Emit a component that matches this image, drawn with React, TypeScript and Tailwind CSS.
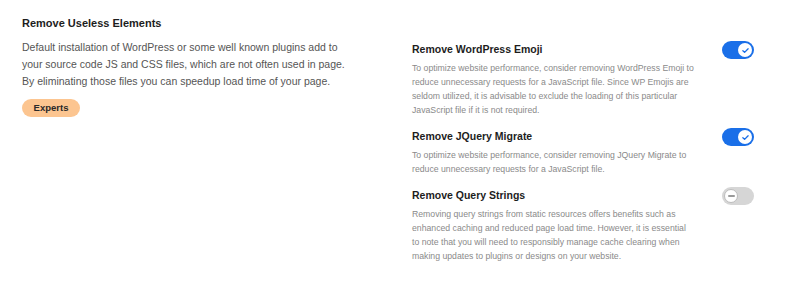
import React from 'react'

// ── سوییچ روشن/خاموش ──
function Toggle({ on }: { on: boolean }) {
 return (
  <div className={`w-[32px] h-[18px] rounded-full flex items-center px-[2px] shrink-0 ${on ? 'bg-[#1a6fe8] justify-end' : 'bg-[#d6d6d6] justify-start'}`}>
   <div className={`w-[14px] h-[14px] rounded-full bg-white flex items-center justify-center ${on ? '' : 'border border-[#bdbdbd]'}`}>
    {on ? (
     <svg viewBox="0 0 12 12" className="w-[9px] h-[9px]" fill="none" stroke="#1a6fe8" strokeWidth="1.8" strokeLinecap="round" strokeLinejoin="round">
      <path d="M2.5 6.3l2.3 2.2L9.5 3.8" />
     </svg>
    ) : (
     <div className="w-[7px] h-[1.5px] bg-[#9a9a9a] rounded" />
    )}
   </div>
  </div>
 )
}

function Option({ title, desc, on }: { title: string; desc: string; on: boolean }) {
 return (
  <div className="flex items-start justify-between">
   <div className="w-[282px]">
    <div className="text-[10.5px] font-bold text-[#1d1d1d] leading-[14px]">{title}</div>
    <p className="text-[8.7px] leading-[14px] text-[#8a8a8a] mt-[5px]">{desc}</p>
   </div>
   <div className="-mt-[1px]">
    <Toggle on={on} />
   </div>
  </div>
 )
}

export default function App() {
 return (
  <div className="w-[800px] h-[282px] bg-white pl-[22px] pt-[16px] font-['Liberation_Sans',Arial,sans-serif]">
   <h2 className="text-[11px] font-bold text-[#1d1d1d] leading-[14px]">Remove Useless Elements</h2>
   <div className="flex mt-[9px]">
    <div className="w-[390px]">
     <p className="w-[336px] text-[10.5px] leading-[17px] text-[#555]">
      Default installation of WordPress or some well known plugins add to your source code JS and CSS files, which are not often used in page. By eliminating those files you can speedup load time of your page.
     </p>
     <span className="inline-block mt-[9px] bg-[#fcc590] text-[#2a2a2a] text-[9.5px] font-bold rounded-full w-[58px] h-[18px] leading-[18px] text-center">Experts</span>
    </div>
    <div className="w-[342px] flex flex-col gap-[12px] pt-[3px]">
     <Option on title="Remove WordPress Emoji" desc="To optimize website performance, consider removing WordPress Emoji to reduce unnecessary requests for a JavaScript file. Since WP Emojis are seldom utilized, it is advisable to exclude the loading of this particular JavaScript file if it is not required." />
     <Option on title="Remove JQuery Migrate" desc="To optimize website performance, consider removing JQuery Migrate to reduce unnecessary requests for a JavaScript file." />
     <Option on={false} title="Remove Query Strings" desc="Removing query strings from static resources offers benefits such as enhanced caching and reduced page load time. However, it is essential to note that you will need to responsibly manage cache clearing when making updates to plugins or designs on your website." />
    </div>
   </div>
  </div>
 )
}
